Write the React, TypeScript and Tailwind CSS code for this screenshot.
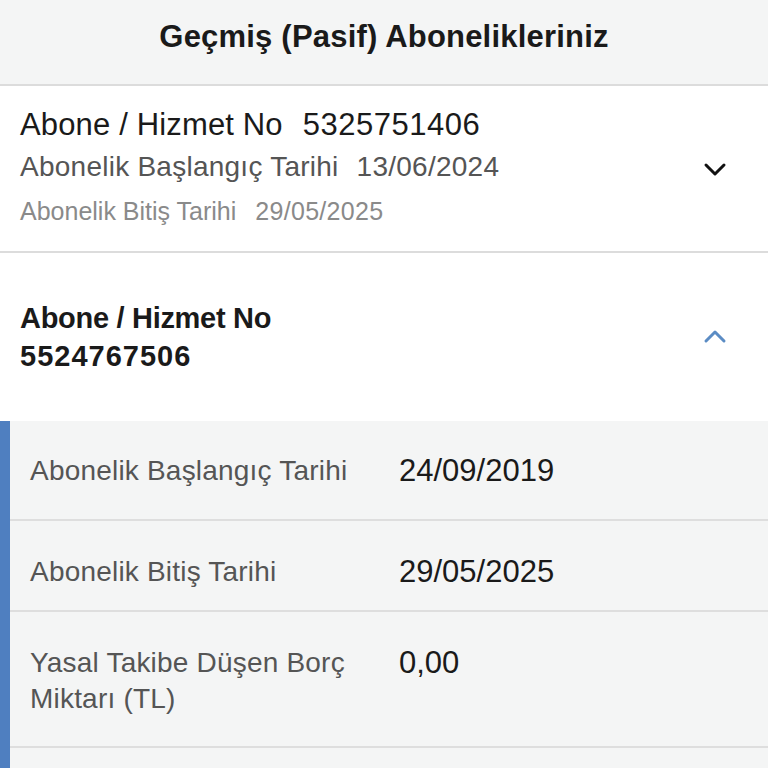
import React from 'react';

const font = { fontFamily: '"Liberation Sans", Arial, sans-serif' };

const ChevronDown = () => (
  <svg width="26" height="16" viewBox="0 0 26 16" fill="none">
    <path d="M4 4l9 9 9-9" stroke="#111" strokeWidth="3" strokeLinecap="round" strokeLinejoin="round" />
  </svg>
);

const ChevronUp = () => (
  <svg width="26" height="16" viewBox="0 0 26 16" fill="none">
    <path d="M4 12l9-9 9 9" stroke="#5b8cc4" strokeWidth="3" strokeLinecap="round" strokeLinejoin="round" />
  </svg>
);

const details = [
  { label: 'Abonelik Başlangıç Tarihi', value: '24/09/2019', h: 'h-[100px] pt-[32px]' },
  { label: 'Abonelik Bitiş Tarihi', value: '29/05/2025', h: 'h-[91px] pt-[33px]' },
  { label: 'Yasal Takibe Düşen Borç Miktarı (TL)', value: '0,00', h: 'h-[136px] pt-[33px]' },
];

export default function App() {
  return (
    <div className="w-[768px] h-[768px] overflow-hidden bg-white" style={font}>
      <div className="h-[86px] bg-[#f4f5f5] border-b-2 border-[#dcdcdc] flex items-center justify-center">
        <h1 className="text-[31px] font-bold text-[#1a1a1a] tracking-[0.2px] -mt-[10px]">Geçmiş (Pasif) Abonelikleriniz</h1>
      </div>

      <div className="h-[167px] border-b-2 border-[#dcdcdc] flex items-center pl-[20px] pr-[40px]">
        <div className="flex-1 flex flex-col">
          <div className="text-[31px] text-[#1a1a1a] leading-[40px] tracking-[0.15px]">
            Abone / Hizmet No<span className="ml-[20px] tracking-[0.5px]">5325751406</span>
          </div>
          <div className="text-[28px] text-[#555] leading-[44px] tracking-[0.25px]">
            Abonelik Başlangıç Tarihi<span className="ml-[18px]">13/06/2024</span>
          </div>
          <div className="text-[25px] text-[#8a8a8a] leading-[44px]">
            Abonelik Bitiş Tarihi<span className="ml-[19px] tracking-[0.3px]">29/05/2025</span>
          </div>
        </div>
        <ChevronDown />
      </div>

      <div className="h-[168px] flex items-center pl-[20px] pr-[40px]">
        <div className="flex-1 text-[29px] font-bold text-[#1a1a1a] leading-[38px]">
          <div className="tracking-[-0.3px]">Abone / Hizmet No</div>
          <div className="tracking-[1px]">5524767506</div>
        </div>
        <ChevronUp />
      </div>

      <div className="bg-[#f4f5f5] border-l-[10px] border-[#4f7fc0]">
        {details.map((d) => (
          <div key={d.label} className={`${d.h} border-b-2 border-[#dedede] flex pl-[20px]`}>
            <div className="w-[369px] pr-[20px] text-[28px] text-[#555] leading-[36px] tracking-[0.2px]">{d.label}</div>
            <div className="text-[31px] text-[#1a1a1a] leading-[36px]">{d.value}</div>
          </div>
        ))}
        <div className="h-[40px]" />
      </div>
    </div>
  );
}
